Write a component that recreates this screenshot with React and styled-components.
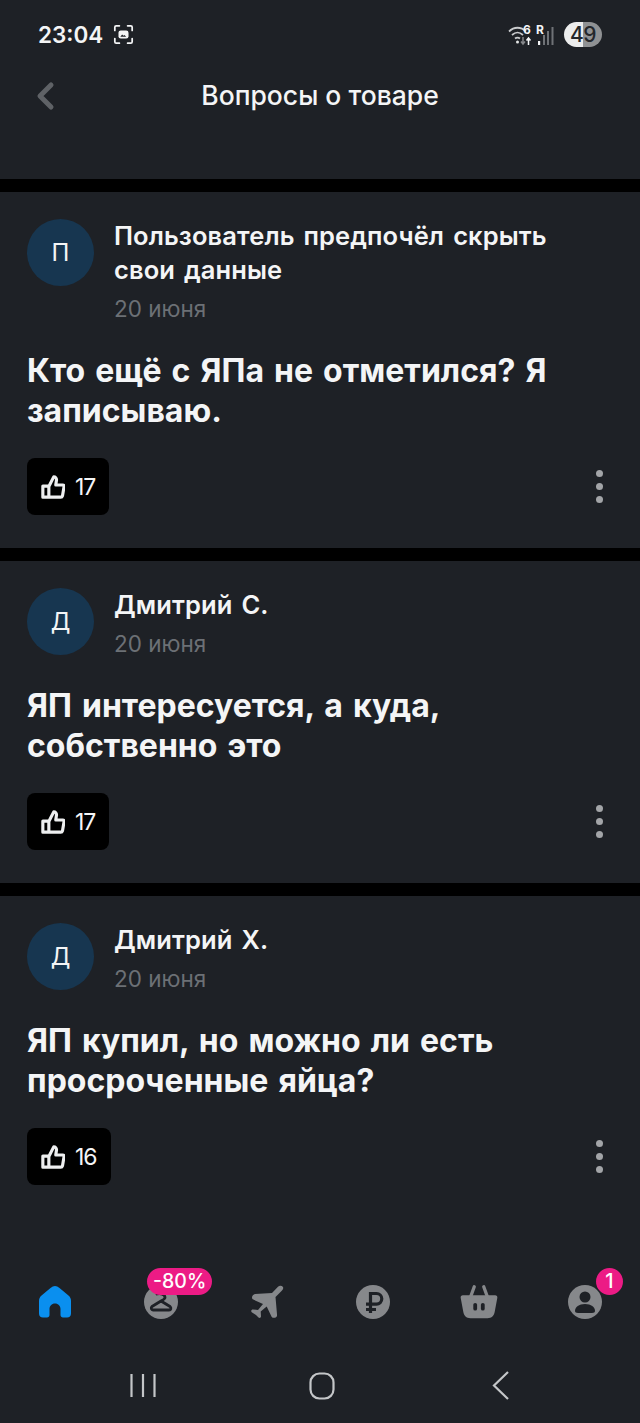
import React from 'react';
import styled, { createGlobalStyle } from 'styled-components';

const GlobalStyle = createGlobalStyle`
    html, body {
        margin: 0;
        padding: 0;
        background: #1e2126;
    }
    * {
        box-sizing: border-box;
    }
`;

const Page = styled.div`
    position: relative;
    width: 640px;
    height: 1423px;
    display: flex;
    flex-direction: column;
    overflow: hidden;
    background: #1e2126;
    color: #f4f5f6;
    font-family: Inter, "Noto Sans", sans-serif;
`;

const Header = styled.header`
    height: 179px;
    flex-shrink: 0;
    padding: 19px 38px 0;
`;

const StatusBar = styled.div`
    height: 30px;
    display: flex;
    align-items: center;
    justify-content: space-between;
`;

const StatusLeft = styled.div`
    display: flex;
    align-items: center;
    gap: 10px;
`;

const Time = styled.span`
    font-size: 22.5px;
    font-weight: 600;
`;

const StatusRight = styled.div`
    display: flex;
    align-items: center;
    gap: 8px;
`;

const Battery = styled.div`
    width: 38px;
    height: 25px;
    border-radius: 13px;
    display: flex;
    align-items: center;
    justify-content: center;
    background: linear-gradient(90deg, #eceded 0 50%, #8f9193 50% 100%);
    color: #24272b;
    font-size: 21px;
    font-weight: 500;
    letter-spacing: -.5px;
`;

const TitleBar = styled.div`
    position: relative;
    margin-top: 26px;
    height: 40px;
    display: flex;
    align-items: center;
    justify-content: center;
`;

const BackButton = styled.div`
    position: absolute;
    left: -4px;
    top: 5px;
    display: flex;
`;

const Title = styled.h1`
    margin: 0;
    font-size: 26.5px;
    font-weight: 500;
`;

const Card = styled.section`
    flex-shrink: 0;
    border-top: 13px solid #000;
    padding: 27px 27px ${props => (props.last ? '0' : '33px')};
    background: #1e2126;
`;

const Author = styled.div`
    display: flex;
    gap: 20px;
`;

const Avatar = styled.div`
    width: 67px;
    height: 67px;
    flex-shrink: 0;
    border-radius: 50%;
    display: flex;
    align-items: center;
    justify-content: center;
    background: #173650;
    font-size: 24px;
`;

const AuthorInfo = styled.div`
    min-width: 0;
    padding-right: 30px;
`;

const Name = styled.div`
    font-size: 25.5px;
    line-height: 34px;
    font-weight: 600;
    letter-spacing: .1px;
    word-spacing: 2.5px;
`;

const DateText = styled.div`
    margin-top: 4px;
    font-size: 22.5px;
    line-height: 35px;
    color: #6c7075;
`;

const Question = styled.p`
    margin: 25px 0 0;
    font-size: 32px;
    line-height: 40px;
    font-weight: 700;
    word-spacing: 2.5px;
`;

const Actions = styled.div`
    margin-top: 27px;
    display: flex;
    align-items: center;
    justify-content: space-between;
`;

const LikeButton = styled.div`
    height: 57px;
    padding: 0 14px;
    border-radius: 8px;
    display: flex;
    align-items: center;
    gap: 10px;
    background: #000;
    font-size: 23px;
    letter-spacing: -1px;
`;

const MoreButton = styled.div`
    margin-right: 10px;
    display: flex;
    flex-direction: column;
    gap: 6px;
`;

const Dot = styled.span`
    width: 7px;
    height: 7px;
    border-radius: 50%;
    background: #a3a5a8;
`;

const Spacer = styled.div`
    flex: 1;
`;

const TabBar = styled.nav`
    height: 60px;
    flex-shrink: 0;
    margin-bottom: 95px;
    padding-left: 2px;
    display: grid;
    grid-template-columns: repeat(6, 106px);
    align-items: center;
`;

const Tab = styled.div`
    position: relative;
    height: 60px;
    display: flex;
    align-items: center;
    justify-content: center;
    padding-top: 8px;
`;

const SalePill = styled.span`
    position: absolute;
    left: 39px;
    top: 0;
    height: 27px;
    padding: 0 6px;
    border-radius: 14px;
    background: #ec1b85;
    color: #fff;
    font-size: 19.5px;
    line-height: 27px;
    font-weight: 500;
`;

const CountBadge = styled.span`
    position: absolute;
    left: 64px;
    top: 0;
    width: 27px;
    height: 27px;
    border-radius: 50%;
    background: #ec1b85;
    color: #fff;
    font-size: 20px;
    line-height: 27px;
    font-weight: 500;
    text-align: center;
`;

const SystemNav = styled.div`
    position: absolute;
    top: 1365px;
    left: 0;
    width: 640px;
    height: 40px;
`;

const SysIcon = styled.svg`
    position: absolute;
    top: 0;
    left: ${props => props.x}px;
`;

const GRAY = '#86888b';
const BG = '#1e2126';

const ScreenshotIcon = () => (
    <svg width="21" height="21" viewBox="0 0 23 23" fill="none">
        <path d="M2 7V3.500A1.500 1.500 0 0 1 3.500 2H7M16 2h3.500A1.500 1.500 0 0 1 21 3.500V7M21 16v3.500a1.500 1.500 0 0 1-1.500 1.500H16M7 21H3.500A1.500 1.500 0 0 1 2 19.500V16" stroke="#f4f5f6" strokeWidth="1.900" strokeLinecap="round" />
        <rect x="6" y="7" width="11" height="9" rx="2.500" fill="#f4f5f6" />
        <path d="M8 14l2-2.500 1.500 1.500 1-1 2 2z" fill={BG} />
    </svg>
);

const NetworkIcons = () => (
    <svg width="48" height="28" viewBox="0 0 48 28" fill="none">
        <path d="M1 11.500C6 6.500 13 6.500 18 11.500" stroke="#c9cbcd" strokeWidth="1.800" />
        <path d="M4 15C8 11.500 11 11.500 15 15" stroke="#c9cbcd" strokeWidth="1.800" />
        <path d="M7 18.500c2-1.500 3-1.500 5 0" stroke="#c9cbcd" strokeWidth="1.800" />
        <circle cx="9.500" cy="22" r="1.500" fill="#e4e5e6" />
        <text x="15" y="14" fill="#f4f5f6" fontSize="12" fontWeight="700" fontFamily="Inter, sans-serif">6</text>
        <path d="M15 17v7M13 21.500l2 2.500 2-2.500" stroke="#85878a" strokeWidth="1.500" />
        <path d="M20.500 25v-7M18.500 20.500l2-2.500 2 2.500" stroke="#f4f5f6" strokeWidth="1.500" />
        <text x="28" y="14" fill="#f4f5f6" fontSize="12" fontWeight="700" fontFamily="Inter, sans-serif">R</text>
        <rect x="30" y="21" width="2.200" height="4" fill="#f4f5f6" />
        <rect x="35" y="15" width="2" height="10" fill="#6f7276" />
        <rect x="39" y="11" width="2" height="14" fill="#6f7276" />
        <rect x="43.500" y="7" width="2" height="18" fill="#6f7276" />
    </svg>
);

const ChevronBack = () => (
    <svg width="22" height="32" viewBox="0 0 22 32" fill="none">
        <path d="M17 5L6 16l11 11" stroke="#5f6266" strokeWidth="5" strokeLinecap="round" strokeLinejoin="round" />
    </svg>
);

const ThumbIcon = () => (
    <svg width="24" height="24" viewBox="0 0 26 26" fill="none">
        <path d="M8.500 12H2v12h6.500M8.500 24h13c1 0 1.500-.5 1.800-1.500L25 12.500c.2-1-.4-1.700-1.300-1.700H16l.8-5.300C17 3.500 15.500 2 13.800 2L8.500 12.500z" stroke="#eeeff0" strokeWidth="3.400" strokeLinejoin="round" />
    </svg>
);

const HomeIcon = () => (
    <svg width="34" height="34" viewBox="0 0 34 34">
        <path d="M17 1c1.500 0 3 .7 4.500 2l9 7.500C32.500 12.300 33 14 33 16v12.500c0 2.500-1.500 4-4 4h-4c-1.500 0-2.500-1-2.500-2.500v-6c0-3-2.200-5.500-5.500-5.500s-5.500 2.500-5.500 5.500v6c0 1.500-1 2.500-2.500 2.500H5c-2.500 0-4-1.500-4-4V16c0-2 .5-3.700 2.500-5.500l9-7.500C14 1.700 15.500 1 17 1z" fill="#0a8fef" />
    </svg>
);

const HangerIcon = () => (
    <svg width="36" height="36" viewBox="0 0 36 36" fill="none">
        <rect x="1" y="1" width="34" height="34" rx="17" fill={GRAY} />
        <path d="M14 10c3-1 8 0 8 3.500 0 1.500-2 2.500-4 3.500L9 22.500c-1.500 1.500-.5 3.500 1 3.500h16c2 0 2.500-2 1-3.500L18 17" stroke={BG} strokeWidth="2.800" strokeLinejoin="round" strokeLinecap="round" />
    </svg>
);

const PlaneIcon = () => (
    <svg width="36" height="36" viewBox="0 0 36 36">
        <path d="M33.500 2.500c-1.300-1.300-3.500-.8-5 .7L23 9 6 10c-1.500.2-3 2-3 3.500 0 1 .5 1.700 1.300 2.100L14 20l-5 6-5-.5c-1.500 0-2.500 1.500-1.300 2.700L7 31l2.500 2.500c1 1 2.500.2 2.500-1.200l-.3-4.800 6-5 5 10.500c.7 1 3 1 4 .5 1.200-.7 1.500-2 1.300-3.300L26.500 13l6.500-6.500c1.300-1.300 1.800-3 .5-4z" fill={GRAY} />
    </svg>
);

const RubleIcon = () => (
    <svg width="36" height="36" viewBox="0 0 36 36" fill="none">
        <rect x="1" y="1" width="34" height="34" rx="17" fill={GRAY} />
        <path d="M15.500 29V9.500h6a5.300 5.300 0 0 1 0 10.600H11M11 25.500h10" stroke={BG} strokeWidth="3.200" />
    </svg>
);

const BasketIcon = () => (
    <svg width="38" height="36" viewBox="0 0 40 36">
        <path d="M11 13L15 2M29 13L25 2" stroke={GRAY} strokeWidth="3.500" strokeLinecap="round" />
        <path d="M3 11h34c1.500 0 2.500 1 2.300 2.500l-2.800 15c-.7 4-3 6.500-7.500 6.500H11c-4.500 0-6.800-2.500-7.500-6.500L.7 13.500C.5 12 1.500 11 3 11z" fill={GRAY} />
        <rect x="14" y="19" width="4" height="8" rx="2" fill={BG} />
        <rect x="22" y="19" width="4" height="8" rx="2" fill={BG} />
    </svg>
);

const ProfileIcon = () => (
    <svg width="36" height="36" viewBox="0 0 36 36" fill="none">
        <rect x="1" y="1" width="34" height="34" rx="17" fill={GRAY} />
        <circle cx="18" cy="13" r="5.500" fill={BG} />
        <path d="M8 27c0-4 4-7 10-7s10 3 10 7c0 1-1 2-3 2H11c-2 0-3-1-3-2z" fill={BG} />
    </svg>
);

const QUESTIONS = [
    { letter: 'П', name: 'Пользователь предпочёл скрыть свои данные', text: 'Кто ещё с ЯПа не отметился? Я записываю.', likes: 17 },
    { letter: 'Д', name: 'Дмитрий С.', text: 'ЯП интересуется, а куда, собственно это', likes: 17 },
    { letter: 'Д', name: 'Дмитрий Х.', text: 'ЯП купил, но можно ли есть просроченные яйца?', likes: 16 },
];

function QuestionCard({ item, last }) {
    return (
        <Card last={last}>
            <Author>
                <Avatar>{item.letter}</Avatar>
                <AuthorInfo>
                    <Name>{item.name}</Name>
                    <DateText>20 июня</DateText>
                </AuthorInfo>
            </Author>
            <Question>{item.text}</Question>
            <Actions>
                <LikeButton>
                    <ThumbIcon />
                    {item.likes}
                </LikeButton>
                <MoreButton>
                    <Dot />
                    <Dot />
                    <Dot />
                </MoreButton>
            </Actions>
        </Card>
    );
}

export default function App() {
    return (
        <Page>
            <GlobalStyle />
            <Header>
                <StatusBar>
                    <StatusLeft>
                        <Time>23:04</Time>
                        <ScreenshotIcon />
                    </StatusLeft>
                    <StatusRight>
                        <NetworkIcons />
                        <Battery>49</Battery>
                    </StatusRight>
                </StatusBar>
                <TitleBar>
                    <BackButton>
                        <ChevronBack />
                    </BackButton>
                    <Title>Вопросы о товаре</Title>
                </TitleBar>
            </Header>
            {QUESTIONS.map((item, i) => (
                <QuestionCard key={i} item={item} last={i === QUESTIONS.length - 1} />
            ))}
            <Spacer />
            <TabBar>
                <Tab><HomeIcon /></Tab>
                <Tab>
                    <HangerIcon />
                    <SalePill>-80%</SalePill>
                </Tab>
                <Tab><PlaneIcon /></Tab>
                <Tab><RubleIcon /></Tab>
                <Tab><BasketIcon /></Tab>
                <Tab>
                    <ProfileIcon />
                    <CountBadge>1</CountBadge>
                </Tab>
            </TabBar>
            <SystemNav>
                <SysIcon x={128} width="30" height="40" viewBox="0 0 30 40" fill="none">
                    <path d="M3.500 9v23M15 9v23M26.500 9v23" stroke="#c4c6c8" strokeWidth="2.200" />
                </SysIcon>
                <SysIcon x={301} width="40" height="40" viewBox="0 0 40 40" fill="none">
                    <rect x="9.500" y="8.500" width="23" height="25" rx="9" stroke="#c4c6c8" strokeWidth="2.200" />
                </SysIcon>
                <SysIcon x={485} width="32" height="40" viewBox="0 0 32 40" fill="none">
                    <path d="M23 7L9 20.500 23 34" stroke="#c4c6c8" strokeWidth="2.200" />
                </SysIcon>
            </SystemNav>
        </Page>
    );
}
